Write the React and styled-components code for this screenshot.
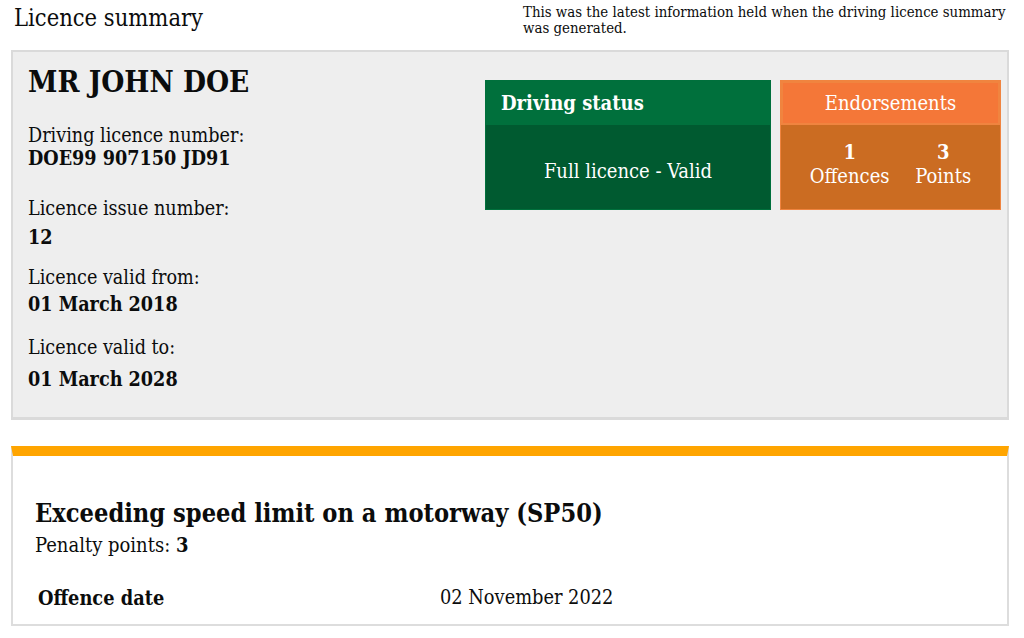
import React from "react";
import styled, { createGlobalStyle } from "styled-components";

const GlobalStyle = createGlobalStyle`
  html, body {
    margin: 0;
    padding: 0;
    background: #ffffff;
  }
  body {
    font-family: "DejaVu Serif Condensed", "DejaVu Serif", serif;
    color: #0b0c0c;
  }
`;

const Page = styled.div`
  width: 1024px;
  height: 638px;
  overflow: hidden;
  padding: 0 15px 0 11px;
  box-sizing: border-box;
`;

const TopBar = styled.div`
  display: flex;
  justify-content: space-between;
  height: 50px;
`;

const PageTitle = styled.h1`
  margin: 4px 0 0 3px;
  font-weight: 400;
  font-size: 23.5px;
  line-height: 28px;
`;

const Note = styled.p`
  margin: 4px -12px 0 0;
  width: 498px;
  font-size: 14.85px;
  line-height: 16px;
`;

const SummaryPanel = styled.section`
  display: flex;
  height: 370px;
  box-sizing: border-box;
  background: #eeeeee;
  border: 2px solid #dadada;
  border-bottom-width: 3px;
`;

const Details = styled.div`
  flex: 1;
  padding: 13px 0 0 15px;
`;

const Name = styled.h2`
  margin: 0 0 25px 0;
  font-size: 29.5px;
  line-height: 34px;
  font-weight: 700;
`;

const Label = styled.div`
  margin-top: ${(p) => p.$top || 0}px;
  font-size: 19.6px;
  line-height: 23px;
`;

const Value = styled.div`
  margin-top: ${(p) => p.$top || 0}px;
  font-size: 19.6px;
  line-height: 23px;
  font-weight: 700;
`;

const Cards = styled.div`
  display: flex;
  gap: 9px;
  padding: 28px 6px 0 0;
  align-items: flex-start;
`;

const Card = styled.div`
  width: ${(p) => p.$width}px;
  height: 130px;
  box-sizing: border-box;
  display: flex;
  flex-direction: column;
  color: #ffffff;
  background: ${(p) => p.$body};
  border: 1px solid ${(p) => p.$edge};
`;

const CardHead = styled.div`
  height: 44px;
  box-sizing: border-box;
  display: flex;
  align-items: center;
  justify-content: ${(p) => (p.$center ? "center" : "flex-start")};
  padding: 0 13px;
  background: ${(p) => p.$bg};
  border: 2px solid ${(p) => p.$edge};
  font-size: 20px;
  font-weight: ${(p) => (p.$bold ? 700 : 400)};
`;

const CardBody = styled.div`
  flex: 1;
  display: flex;
  align-items: center;
  justify-content: center;
  font-size: 20px;
  padding-top: 8px;
`;

const Counts = styled.div`
  flex: 1;
  display: flex;
  justify-content: space-around;
  align-items: center;
  padding: 0 16px 6px 16px;
  font-size: 20px;
  line-height: 24px;
  text-align: center;
`;

const Count = styled.div`
  display: flex;
  flex-direction: column;
  align-items: center;
`;

const Num = styled.span`
  font-weight: 700;
`;

const OffenceCard = styled.section`
  margin-top: 26px;
  height: 180px;
  box-sizing: border-box;
  background: #ffffff;
  border: 2px solid #dddddd;
  border-top: 10px solid #ffa500;
  padding: 42px 0 0 22px;
`;

const OffenceTitle = styled.h3`
  margin: 0;
  font-size: 25.2px;
  line-height: 30px;
  font-weight: 700;
`;

const Penalty = styled.p`
  margin: 5px 0 29px 0;
  font-size: 20px;
  line-height: 24px;
`;

const Row = styled.div`
  display: grid;
  grid-template-columns: 402px 1fr;
  padding-left: 3px;
  font-size: 19.8px;
  line-height: 24px;
`;

const RowKey = styled.div`
  font-weight: 700;
`;

const RowValue = styled.div``;

export default function App() {
  return (
    <Page>
      <GlobalStyle />
      <TopBar>
        <PageTitle>Licence summary</PageTitle>
        <Note>
          This was the latest information held when the driving licence summary
          was generated.
        </Note>
      </TopBar>

      <SummaryPanel>
        <Details>
          <Name>MR JOHN DOE</Name>
          <Label>Driving licence number:</Label>
          <Value>DOE99 907150 JD91</Value>
          <Label $top={27}>Licence issue number:</Label>
          <Value $top={6}>12</Value>
          <Label $top={17}>Licence valid from:</Label>
          <Value $top={4}>01 March 2018</Value>
          <Label $top={20}>Licence valid to:</Label>
          <Value $top={9}>01 March 2028</Value>
        </Details>

        <Cards>
          <Card $width={286} $body="#005a30" $edge="#00703c">
            <CardHead $bg="#00703c" $edge="#00703c" $bold>
              Driving status
            </CardHead>
            <CardBody>Full licence - Valid</CardBody>
          </Card>
          <Card $width={221} $body="#cb6c22" $edge="#f0843f">
            <CardHead $bg="#f47738" $edge="#f0843f" $center>
              Endorsements
            </CardHead>
            <Counts>
              <Count>
                <Num>1</Num>
                <span>Offences</span>
              </Count>
              <Count>
                <Num>3</Num>
                <span>Points</span>
              </Count>
            </Counts>
          </Card>
        </Cards>
      </SummaryPanel>

      <OffenceCard>
        <OffenceTitle>Exceeding speed limit on a motorway (SP50)</OffenceTitle>
        <Penalty>
          Penalty points: <b>3</b>
        </Penalty>
        <Row>
          <RowKey>Offence date</RowKey>
          <RowValue>02 November 2022</RowValue>
        </Row>
      </OffenceCard>
    </Page>
  );
}
